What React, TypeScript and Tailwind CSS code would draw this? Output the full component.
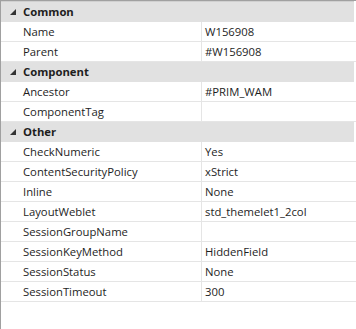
import React from "react";

type Row = { k: string; v?: string };
type Group = { name: string; rows: Row[] };

const groups: Group[] = [
  { name: "Common", rows: [{ k: "Name", v: "W156908" }, { k: "Parent", v: "#W156908" }] },
  { name: "Component", rows: [{ k: "Ancestor", v: "#PRIM_WAM" }, { k: "ComponentTag", v: "" }] },
  {
    name: "Other",
    rows: [
      { k: "CheckNumeric", v: "Yes" },
      { k: "ContentSecurityPolicy", v: "xStrict" },
      { k: "Inline", v: "None" },
      { k: "LayoutWeblet", v: "std_themelet1_2col" },
      { k: "SessionGroupName", v: "" },
      { k: "SessionKeyMethod", v: "HiddenField" },
      { k: "SessionStatus", v: "None" },
      { k: "SessionTimeout", v: "300" },
    ],
  },
];

function Tri() {
  return (
    <svg width="6" height="6" viewBox="0 0 6 6" className="block">
      <polygon points="6,0 6,6 0,6" fill="#333" />
    </svg>
  );
}

export default function App() {
  return (
    <div
      className="w-[356px] h-[329px] bg-white border-t border-l border-[#a0a0a0] text-[11.3px] text-[#1e1e1e] overflow-hidden"
      style={{ fontFamily: '"Segoe UI", "Open Sans", sans-serif' }}
    >
      <div className="h-[1px] bg-[#d0d0d0] mr-[2px]" />
      {groups.map((g) => (
        <div key={g.name}>
          <div className="h-[20px] bg-[#e1e1e1] flex items-center mr-[2px]">
            <div className="w-[22px] flex justify-end pr-[7px]">
              <Tri />
            </div>
            <span className="font-bold leading-none">{g.name}</span>
          </div>
          {g.rows.map((r) => (
            <div key={r.k} className="h-[20px] flex border-b border-[#e5e5e5]">
              <div className="w-[201px] pl-[22px] flex items-center border-r border-[#e5e5e5] leading-none">
                {r.k}
              </div>
              <div className="flex-1 pl-[3px] flex items-center leading-none">{r.v}</div>
            </div>
          ))}
        </div>
      ))}
    </div>
  );
}
